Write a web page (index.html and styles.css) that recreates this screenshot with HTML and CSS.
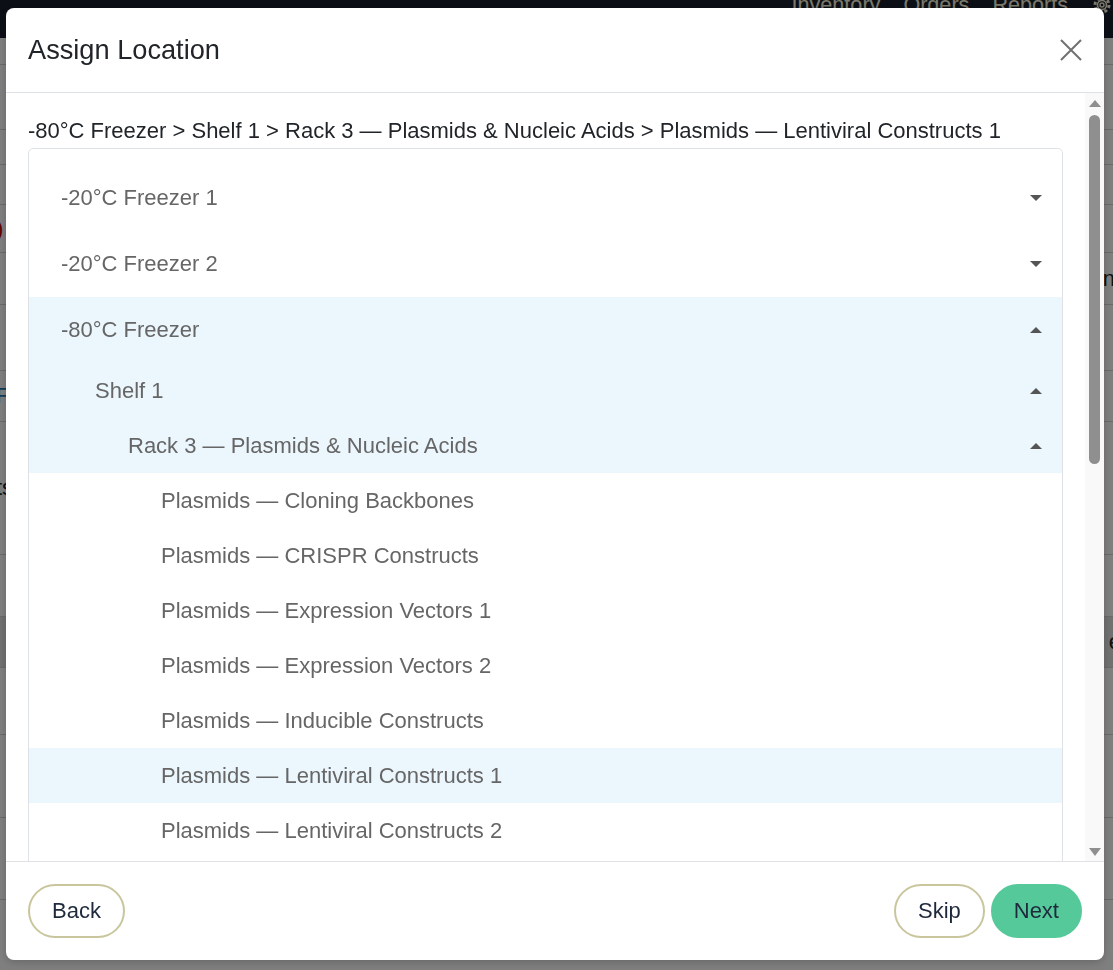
FILE: index.html
```html
<!DOCTYPE html>
<html lang="en">
<head>
<meta charset="utf-8">
<title>Assign Location</title>
<link rel="stylesheet" href="styles.css">
</head>
<body>
<div class="page">
  <header class="topnav">
    <nav class="topnav-links">
      <span>Inventory</span>
      <span>Orders</span>
      <span>Reports</span>
      <svg class="gear" viewBox="0 0 22 22" width="22" height="22" aria-hidden="true">
        <circle cx="11" cy="11" r="7" fill="none" stroke="currentColor" stroke-width="3" stroke-dasharray="3 2.5"/>
        <circle cx="11" cy="11" r="4.5" fill="none" stroke="currentColor" stroke-width="1.6"/>
        <circle cx="11" cy="11" r="2" fill="none" stroke="currentColor" stroke-width="1.4"/>
      </svg>
    </nav>
  </header>
  <main class="page-rows">
    <div class="bg-row"></div>
    <div class="bg-row"></div>
    <div class="bg-row"></div>
    <div class="bg-row"></div>
    <div class="bg-row"><span class="bg-left red">)</span></div>
    <div class="bg-row"><span class="bg-right">nt</span></div>
    <div class="bg-row"></div>
    <div class="bg-row"><span class="bg-left blue">F</span></div>
    <div class="bg-row"><span class="bg-left">ts</span></div>
    <div class="bg-row"></div>
    <div class="bg-row shaded"><span class="bg-right">e</span></div>
    <div class="bg-row"></div>
    <div class="bg-row"></div>
    <div class="bg-row"></div>
  </main>
</div>

<div class="backdrop"></div>

<div class="modal" role="dialog" aria-labelledby="modal-title">
  <div class="modal-header">
    <h2 class="modal-title" id="modal-title">Assign Location</h2>
    <button class="close-btn" type="button" aria-label="Close">
      <svg viewBox="0 0 22 22" width="22" height="22" aria-hidden="true">
        <path d="M1 1 L21 21 M21 1 L1 21" stroke="#707070" stroke-width="2" fill="none"/>
      </svg>
    </button>
  </div>

  <div class="modal-body">
    <div class="scroll-content">
      <div class="breadcrumb">-80°C Freezer &gt; Shelf 1 &gt; Rack 3 — Plasmids &amp; Nucleic Acids &gt; Plasmids — Lentiviral Constructs 1</div>
      <div class="tree">
        <div class="node l0"><span>-20°C Freezer 1</span><i class="caret down"></i></div>
        <div class="node l0"><span>-20°C Freezer 2</span><i class="caret down"></i></div>
        <div class="node l0 open"><span>-80°C Freezer</span><i class="caret up"></i></div>
        <div class="node l1 open"><span>Shelf 1</span><i class="caret up"></i></div>
        <div class="node l2 open"><span>Rack 3 — Plasmids &amp; Nucleic Acids</span><i class="caret up"></i></div>
        <div class="node l3"><span>Plasmids — Cloning Backbones</span></div>
        <div class="node l3"><span>Plasmids — CRISPR Constructs</span></div>
        <div class="node l3"><span>Plasmids — Expression Vectors 1</span></div>
        <div class="node l3"><span>Plasmids — Expression Vectors 2</span></div>
        <div class="node l3"><span>Plasmids — Inducible Constructs</span></div>
        <div class="node l3 selected"><span>Plasmids — Lentiviral Constructs 1</span></div>
        <div class="node l3"><span>Plasmids — Lentiviral Constructs 2</span></div>
      </div>
    </div>
    <div class="scrollbar" aria-hidden="true">
      <span class="sb-arrow up"></span>
      <span class="sb-thumb"></span>
      <span class="sb-arrow down"></span>
    </div>
  </div>

  <div class="modal-footer">
    <button class="btn btn-outline" type="button">Back</button>
    <div class="footer-right">
      <button class="btn btn-outline" type="button">Skip</button>
      <button class="btn btn-primary" type="button">Next</button>
    </div>
  </div>
</div>
</body>
</html>
```

FILE: styles.css
```css
* { box-sizing: border-box; }

html, body {
  margin: 0;
  height: 100%;
}

body {
  font-family: "Liberation Sans", Arial, sans-serif;
  background: #ffffff;
  overflow: hidden;
}

/* ---------- background page ---------- */
.page {
  height: 970px;
}

.topnav {
  height: 38px;
  background: #18202c;
  display: flex;
  justify-content: flex-end;
  overflow: hidden;
}

.topnav-links {
  display: flex;
  align-items: flex-start;
  gap: 23px;
  margin-top: -6px;
  font-size: 21.6px;
  line-height: 21.6px;
  color: #f8f4da;
}

.gear {
  color: #f8f4da;
  flex: none;
}

.page-rows {
  display: grid;
  grid-template-rows: 27px 65px 35px 40px 48px 52px 66px 51px 133px 62px 51px 67px 83px 82px;
}

.bg-row {
  border-bottom: 1px solid #d0d4d8;
  display: flex;
  align-items: center;
  font-size: 22px;
  color: #222;
  overflow: hidden;
}

.bg-row.shaded {
  background: #e2e2e2;
}

.bg-left {
  margin-left: -4px;
}

.bg-right {
  margin-left: auto;
  margin-right: -8px;
}

.red { color: #c00000; }
.blue { color: #1f78b4; }

.backdrop {
  position: fixed;
  inset: 0;
  background: rgba(0, 0, 0, 0.5);
}

/* ---------- modal ---------- */
.modal {
  position: fixed;
  top: 8px;
  left: 6px;
  width: 1098px;
  height: 952px;
  background: #ffffff;
  border-radius: 8px;
  display: flex;
  flex-direction: column;
  overflow: hidden;
  box-shadow: 0 2px 8px rgba(0, 0, 0, 0.2);
}

.modal-header {
  flex: none;
  height: 85px;
  padding: 0 22px;
  display: flex;
  align-items: center;
  justify-content: space-between;
  border-bottom: 1px solid #dee2e6;
}

.modal-title {
  margin: 0;
  font-size: 27.2px;
  font-weight: 400;
  line-height: 1.2;
  color: #212529;
}

.close-btn {
  width: 22px;
  height: 22px;
  padding: 0;
  border: 0;
  background: none;
  display: flex;
  cursor: pointer;
}

.modal-body {
  flex: 1;
  min-height: 0;
  display: flex;
}

.scroll-content {
  flex: 1;
  min-width: 0;
  overflow: hidden;
  padding: 22px 22px 0 22px;
}

.scrollbar {
  flex: none;
  width: 19px;
  background: #f9f9f9;
  display: flex;
  flex-direction: column;
  align-items: center;
}

.sb-arrow {
  width: 0;
  height: 0;
  border-left: 6.5px solid transparent;
  border-right: 6.5px solid transparent;
}

.sb-arrow.up {
  border-bottom: 7px solid #8f8f8f;
  margin-top: 7px;
}

.sb-arrow.down {
  border-top: 8px solid #8f8f8f;
  margin-top: auto;
  margin-bottom: 5px;
}

.sb-thumb {
  width: 11px;
  height: 349px;
  margin-top: 8px;
  border-radius: 6px;
  background: #8f8f8f;
}

.breadcrumb {
  font-size: 22px;
  line-height: 32px;
  color: #212529;
  white-space: nowrap;
  margin-bottom: 1px;
}

.tree {
  border: 1px solid #dee2e6;
  border-radius: 5px;
  padding: 16px 0;
}

.node {
  height: 55px;
  display: flex;
  align-items: center;
  justify-content: space-between;
  padding-left: 32px;
  padding-right: 20px;
  font-size: 22px;
  color: #666666;
  white-space: nowrap;
}

.node.l0 { height: 66px; }
.node.l1 { padding-left: 66px; }
.node.l2 { padding-left: 99px; }
.node.l3 { padding-left: 132px; }

.node.open,
.node.selected {
  background: #ebf6fd;
}

.caret {
  width: 0;
  height: 0;
  border-left: 6.5px solid transparent;
  border-right: 6.5px solid transparent;
}

.caret.down { border-top: 6px solid #555555; }
.caret.up { border-bottom: 6px solid #555555; }

/* ---------- footer ---------- */
.modal-footer {
  flex: none;
  height: 99px;
  padding: 0 22px;
  border-top: 1px solid #dee2e6;
  display: flex;
  align-items: center;
  justify-content: space-between;
}

.footer-right {
  display: flex;
  gap: 6px;
}

.btn {
  height: 54px;
  padding: 0 22px;
  border-radius: 27px;
  border: 2px solid #c9c69e;
  background: #ffffff;
  font-family: "Liberation Sans", Arial, sans-serif;
  font-size: 22px;
  color: #1e293b;
  cursor: pointer;
}

.btn-primary {
  padding: 0 21px;
  background: #55c99a;
  border-color: #55c99a;
}
```
